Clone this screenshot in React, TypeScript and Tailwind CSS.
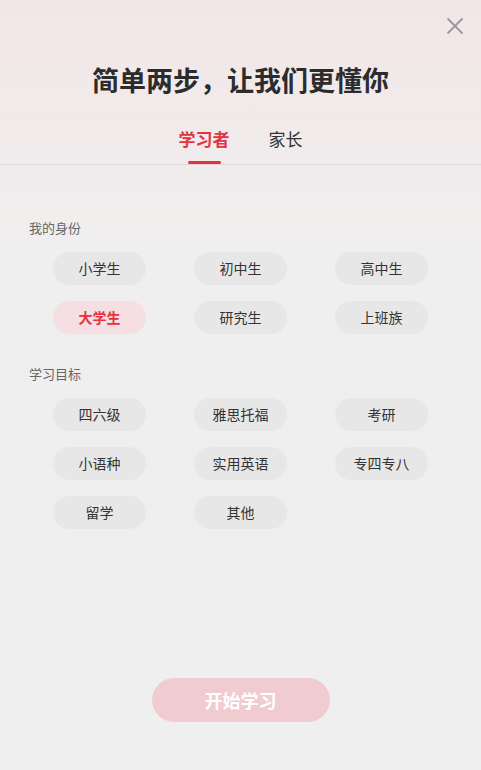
import { useState } from 'react'

const identities = ['小学生', '初中生', '高中生', '大学生', '研究生', '上班族']
const goals = ['四六级', '雅思托福', '考研', '小语种', '实用英语', '专四专八', '留学', '其他']

function Chip({ label, active, onClick }: { label: string; active: boolean; onClick: () => void }) {
  return (
    <button
      onClick={onClick}
      className={
        active
          ? 'h-[33px] w-[93px] rounded-full bg-[#f5dfe2] text-[14px] font-bold text-[#e5323e]'
          : 'h-[33px] w-[93px] rounded-full bg-[#e7e7e7] text-[14px] text-[#333]'
      }
    >
      {label}
    </button>
  )
}

export default function App() {
  const [tab, setTab] = useState<'learner' | 'parent'>('learner')
  const [identity, setIdentity] = useState('大学生')
  const [goal, setGoal] = useState<string | null>(null)

  return (
    <div
      className="relative flex h-[770px] w-[481px] flex-col overflow-hidden bg-gradient-to-b from-[#f2e6e8] via-[#f0eeee] via-30% to-[#efefef] text-[#333]"
      style={{ fontFamily: '"Noto Sans CJK SC", "Noto Sans", sans-serif' }}
    >
      {/* close */}
      <button className="absolute right-[17px] top-[17px] text-[#999]" aria-label="关闭">
        <svg width="18" height="18" viewBox="0 0 18 18" fill="none" stroke="currentColor" strokeWidth="1.8">
          <path d="M1.5 1.5 L16.5 16.5 M16.5 1.5 L1.5 16.5" />
        </svg>
      </button>

      <h1 className="mt-[60px] text-center text-[27px] font-bold leading-[40px] text-[#2c2c2c]">
        简单两步，让我们更懂你
      </h1>

      {/* tabs */}
      <div className="mt-[26px] flex justify-center gap-[39px] border-b border-[#dcd6d7]">
        <button
          onClick={() => setTab('learner')}
          className={`flex flex-col items-center text-[17px] leading-[24px] ${tab === 'learner' ? 'font-bold text-[#e5323e]' : 'text-[#333]'}`}
        >
          <span className="pt-[1px]">学习者</span>
          <span className={`mt-[10px] h-[3px] w-[33px] rounded-full ${tab === 'learner' ? 'bg-[#e5323e]' : 'bg-transparent'}`} />
        </button>
        <button
          onClick={() => setTab('parent')}
          className={`flex flex-col items-center text-[17px] leading-[24px] ${tab === 'parent' ? 'font-bold text-[#e5323e]' : 'text-[#333]'}`}
        >
          <span className="pt-[1px]">家长</span>
          <span className={`mt-[10px] h-[3px] w-[33px] rounded-full ${tab === 'parent' ? 'bg-[#e5323e]' : 'bg-transparent'}`} />
        </button>
      </div>

      <div className="px-[29px] pt-[54px]">
        <div className="text-[13px] leading-[18px] text-[#666]">我的身份</div>
        <div className="mt-[15px] grid grid-cols-[93px_93px_93px] justify-center gap-x-[48px] gap-y-[16px]">
          {identities.map((x) => (
            <Chip key={x} label={x} active={identity === x} onClick={() => setIdentity(x)} />
          ))}
        </div>

        <div className="mt-[31px] text-[13px] leading-[18px] text-[#666]">学习目标</div>
        <div className="mt-[15px] grid grid-cols-[93px_93px_93px] justify-center gap-x-[48px] gap-y-[16px]">
          {goals.map((x) => (
            <Chip key={x} label={x} active={goal === x} onClick={() => setGoal(x)} />
          ))}
        </div>
      </div>

      <div className="mt-auto mb-[48px] flex justify-center">
        <button className="h-[44px] w-[178px] rounded-full bg-[#f0cbd0] text-[18px] font-bold text-white">
          开始学习
        </button>
      </div>
    </div>
  )
}
